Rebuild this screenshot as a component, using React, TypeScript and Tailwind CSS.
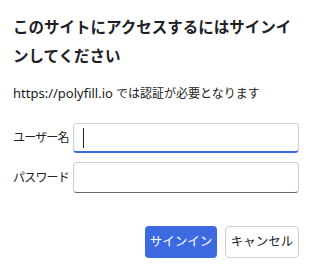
import React from "react";

export default function App() {
  return (
    <div
      className="w-[310px] h-[267px] bg-white text-[#202124] flex flex-col pl-[13px] pr-[11px]"
      style={{ fontFamily: '"Noto Sans", "Noto Sans CJK JP", sans-serif' }}
    >
      <h1 className="mt-[13px] text-[15.5px] leading-[28.5px] font-bold">
        このサイトにアクセスするにはサインインしてください
      </h1>
      <p className="mt-[13px] text-[12px] leading-[20px]">
        <span className="text-[13px]">https://polyfill.io</span> では認証が必要となります
      </p>
      <div className="mt-[19px] flex items-center gap-[8px]">
        <label className="w-[52px] text-[12px] tracking-[-0.8px] shrink-0 whitespace-nowrap">ユーザー名</label>
        <div className="relative flex-1 h-[30px] rounded-[4px] border border-[#d0d0d0] border-b-[2px] border-b-[#3e6ae1]">
          <div className="absolute left-[9px] top-[4px] w-[1px] h-[20px] bg-[#202124]" />
        </div>
      </div>
      <div className="mt-[9px] flex items-center gap-[8px]">
        <label className="w-[52px] text-[12px] tracking-[-0.8px] shrink-0 whitespace-nowrap">パスワード</label>
        <div className="flex-1 h-[31px] rounded-[4px] border border-[#d0d0d0] border-b-[#666666]" />
      </div>
      <div className="mt-[33px] flex justify-end gap-[8px]">
        <button className="w-[72px] h-[32px] rounded-[4px] bg-[#3e6ae1] text-white text-[12.5px]">
          サインイン
        </button>
        <button className="w-[74px] h-[32px] rounded-[4px] border border-[#cfcfcf] bg-white text-[#202124] text-[12.5px]">
          キャンセル
        </button>
      </div>
    </div>
  );
}
